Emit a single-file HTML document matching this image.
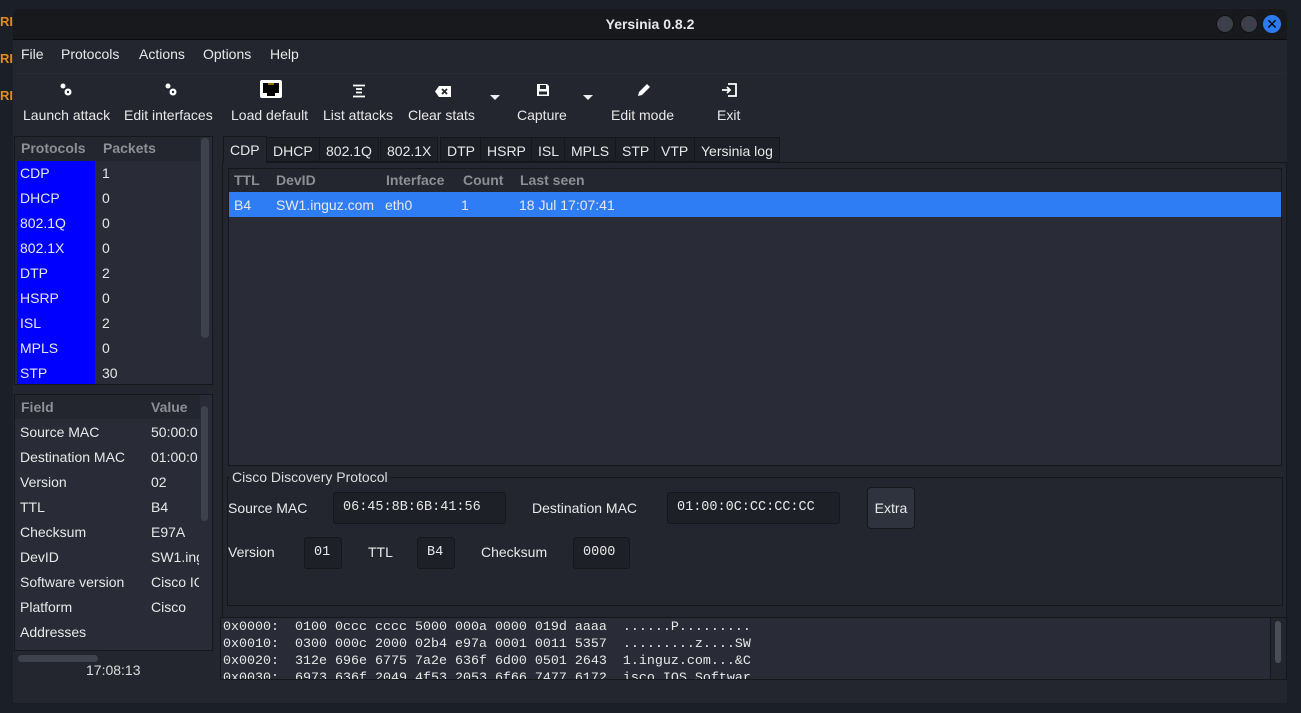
<!DOCTYPE html>
<html><head><meta charset="utf-8"><style>
*{box-sizing:border-box;margin:0;padding:0}
body{width:1301px;height:713px;background:#1b1f27;font-family:"Liberation Sans","DejaVu Sans",sans-serif;font-size:14px;color:#e8e8e8;position:relative;overflow:hidden}
.a{position:absolute;white-space:nowrap}
.win{position:absolute;left:13px;top:9px;width:1274px;height:694px;background:#23262e;border-radius:6px 6px 0 0;overflow:hidden}
.tb{position:absolute;left:0;top:0;width:1274px;height:31px;background:#18191d;border-bottom:1px solid #0c0c0e}
.hd{color:#8c8f96;font-weight:bold}
.box{position:absolute;background:#1e2027;border:1px solid #15171b;border-radius:3px;font-family:"Liberation Mono",monospace;font-size:13.5px;padding-top:7px;padding-left:9px}
.tab{position:absolute;top:138px;height:25px;background:#1e2027;border:1px solid #15171b;padding:5px 6px 0 6px}
.mono{font-family:"Liberation Mono",monospace;font-size:13.33px;line-height:17px;white-space:pre}
</style></head><body>
<div class="a" style="left:0;top:14px;color:#e38b1c;font-weight:bold;font-size:13px">RI</div>
<div class="a" style="left:0;top:51px;color:#e38b1c;font-weight:bold;font-size:13px">RI</div>
<div class="a" style="left:0;top:88px;color:#e38b1c;font-weight:bold;font-size:13px">RI</div>
<div class="win">
<div class="tb"></div>
<div class="a" style="left:0;width:1274px;text-align:center;top:7px;font-weight:bold;font-size:14px">Yersinia 0.8.2</div>
<div class="a" style="left:1203px;top:6px;width:18px;height:18px;border-radius:50%;background:#3c404b;border:1px solid #111"></div>
<div class="a" style="left:1227px;top:6px;width:18px;height:18px;border-radius:50%;background:#3c404b;border:1px solid #111"></div>
<div class="a" style="left:1250px;top:6px;width:18px;height:18px;border-radius:50%;background:#2c7cf0;color:#000;font-weight:bold;text-align:center;line-height:18px;font-size:14px">✕</div>
<div class="a" style="left:8px;top:37px">File</div>
<div class="a" style="left:48px;top:37px">Protocols</div>
<div class="a" style="left:126px;top:37px">Actions</div>
<div class="a" style="left:190px;top:37px">Options</div>
<div class="a" style="left:257px;top:37px">Help</div>
<div class="a" style="left:0;top:64px;width:1274px;height:1px;background:#272a33"></div>
<svg class="a" style="left:46px;top:73px" width="14" height="16" viewBox="0 0 14 16"><circle cx="4" cy="4" r="2.5" fill="#fff"/><circle cx="9" cy="10" r="3.5" fill="#fff"/><circle cx="9" cy="10" r="1.2" fill="#23262e"/></svg>
<svg class="a" style="left:151px;top:73px" width="14" height="16" viewBox="0 0 14 16"><circle cx="4" cy="4" r="2.5" fill="#fff"/><circle cx="9" cy="10" r="3.5" fill="#fff"/><circle cx="9" cy="10" r="1.2" fill="#23262e"/></svg>
<svg class="a" style="left:247px;top:71px" width="22" height="18" viewBox="0 0 22 18"><rect x="0" y="0" width="22" height="18" rx="2" fill="#fff"/><path d="M3 3h16v10h-4v3h-8v-3h-4z" fill="#000"/><path d="M8 4h6" stroke="#c90" stroke-width="1.5"/></svg>
<svg class="a" style="left:339px;top:75px" width="14" height="14" viewBox="0 0 14 14"><path d="M1 1.5h12M4 5h6M4 8.5h6M1 12.5h12" stroke="#fff" stroke-width="1.8"/></svg>
<svg class="a" style="left:422px;top:77px" width="16" height="11" viewBox="0 0 16 11"><path d="M4 0h12v11h-12l-4-5.5z" fill="#fff"/><path d="M7 3l5 5M12 3l-5 5" stroke="#23262e" stroke-width="1.8"/></svg>
<svg class="a" style="left:523px;top:74px" width="14" height="14" viewBox="0 0 14 14"><path d="M1 1h10l2 2v10h-12z" fill="#fff"/><rect x="4" y="2" width="6" height="4" fill="#23262e"/><rect x="3" y="8.5" width="8" height="3" fill="#23262e"/></svg>
<svg class="a" style="left:624px;top:74px" width="14" height="14" viewBox="0 0 14 14"><path d="M1 13l1-4 8-8 3 3-8 8z" fill="#fff"/></svg>
<svg class="a" style="left:709px;top:74px" width="15" height="14" viewBox="0 0 15 14"><path d="M6 1h8v12h-8" fill="none" stroke="#fff" stroke-width="1.8"/><path d="M0 7h8M5 4l3 3-3 3" fill="none" stroke="#fff" stroke-width="1.8"/></svg>
<div class="a" style="left:477px;top:86px;width:0;height:0;border-left:5px solid transparent;border-right:5px solid transparent;border-top:5px solid #eee"></div>
<div class="a" style="left:570px;top:86px;width:0;height:0;border-left:5px solid transparent;border-right:5px solid transparent;border-top:5px solid #eee"></div>
<div class="a" style="left:10px;top:98px">Launch attack</div>
<div class="a" style="left:111px;top:98px">Edit interfaces</div>
<div class="a" style="left:218px;top:98px">Load default</div>
<div class="a" style="left:310px;top:98px">List attacks</div>
<div class="a" style="left:395px;top:98px">Clear stats</div>
<div class="a" style="left:504px;top:98px">Capture</div>
<div class="a" style="left:598px;top:98px">Edit mode</div>
<div class="a" style="left:704px;top:98px">Exit</div>
<div class="a" style="left:1px;top:127px;width:199px;height:249px;border:1px solid #15171b;background:#292c36"></div>
<div class="a" style="left:2px;top:128px;width:185px;height:24px;background:#23262e"></div>
<div class="a hd" style="left:8px;top:131px">Protocols</div>
<div class="a hd" style="left:90px;top:131px">Packets</div>
<div class="a" style="left:4px;top:152px;width:78px;height:223px;background:#0000ff"></div>
<div class="a" style="left:188px;top:129px;width:8px;height:200px;background:#3e424c;border-radius:4px"></div>
<div class="a" style="left:7px;top:152px;line-height:25px">CDP<br>DHCP<br>802.1Q<br>802.1X<br>DTP<br>HSRP<br>ISL<br>MPLS<br>STP</div>
<div class="a" style="left:89px;top:152px;line-height:25px">1<br>0<br>0<br>0<br>2<br>0<br>2<br>0<br>30</div>
<div class="a" style="left:1px;top:385px;width:199px;height:257px;border:1px solid #15171b;background:#292c36"></div>
<div class="a" style="left:2px;top:386px;width:185px;height:24px;background:#23262e"></div>
<div class="a hd" style="left:8px;top:390px">Field</div>
<div class="a hd" style="left:138px;top:390px">Value</div>
<div class="a" style="left:188px;top:397px;width:7px;height:115px;background:#3e424c;border-radius:4px"></div>
<div class="a" style="left:5px;top:646px;width:80px;height:7px;background:#3e424c;border-radius:4px"></div>
<div class="a" style="left:7px;top:411px;line-height:25px">Source MAC<br>Destination MAC<br>Version<br>TTL<br>Checksum<br>DevID<br>Software version<br>Platform<br>Addresses</div>
<div class="a" style="left:138px;top:411px;line-height:25px;width:48px;overflow:hidden">50:00:0<br>01:00:0<br>02<br>B4<br>E97A<br>SW1.ing<br>Cisco IO<br>Cisco<br>&nbsp;</div>
<div class="a" style="left:73px;top:653px;color:#ddd">17:08:13</div>
<div class="a" style="left:209px;top:153px;width:1065px;height:517px;border:1px solid #15171b"></div>
<div class="tab" style="left:210px;top:127px;background:#23262e;border-bottom:none;height:27px">CDP</div>
<div class="tab" style="left:253px;top:128px">DHCP</div>
<div class="tab" style="left:306px;top:128px">802.1Q</div>
<div class="tab" style="left:367px;top:128px">802.1X</div>
<div class="tab" style="left:427px;top:128px">DTP</div>
<div class="tab" style="left:467px;top:128px">HSRP</div>
<div class="tab" style="left:518px;top:128px">ISL</div>
<div class="tab" style="left:551px;top:128px">MPLS</div>
<div class="tab" style="left:602px;top:128px">STP</div>
<div class="tab" style="left:641px;top:128px">VTP</div>
<div class="tab" style="left:681px;top:128px">Yersinia log</div>
<div class="a" style="left:215px;top:159px;width:1054px;height:298px;border:1px solid #15171b;background:#292c36"></div>
<div class="a" style="left:216px;top:160px;width:1052px;height:23px;background:#23262e"></div>
<div class="a hd" style="left:221px;top:163px">TTL</div>
<div class="a hd" style="left:263px;top:163px">DevID</div>
<div class="a hd" style="left:373px;top:163px">Interface</div>
<div class="a hd" style="left:450px;top:163px">Count</div>
<div class="a hd" style="left:507px;top:163px">Last seen</div>
<div class="a" style="left:216px;top:183px;width:1052px;height:25px;background:#2f7df4"></div>
<div class="a" style="left:221px;top:188px">B4</div>
<div class="a" style="left:263px;top:188px">SW1.inguz.com</div>
<div class="a" style="left:372px;top:188px">eth0</div>
<div class="a" style="left:448px;top:188px">1</div>
<div class="a" style="left:506px;top:188px">18 Jul 17:07:41</div>
<div class="a" style="left:214px;top:468px;width:1056px;height:129px;border:1px solid #15171b"></div>
<div class="a" style="left:217px;top:460px;background:#23262e;padding:0 2px;color:#ddd">Cisco Discovery Protocol</div>
<div class="a" style="left:215px;top:491px">Source MAC</div>
<div class="box" style="left:320px;top:483px;width:173px;height:32px">06:45:8B:6B:41:56</div>
<div class="a" style="left:519px;top:491px">Destination MAC</div>
<div class="box" style="left:654px;top:483px;width:173px;height:32px">01:00:0C:CC:CC:CC</div>
<div class="a" style="left:854px;top:478px;width:48px;height:42px;background:#2f333e;border:1px solid #15171b;border-radius:4px;text-align:center;line-height:40px">Extra</div>
<div class="a" style="left:215px;top:535px">Version</div>
<div class="box" style="left:291px;top:528px;width:38px;height:32px">01</div>
<div class="a" style="left:355px;top:535px">TTL</div>
<div class="box" style="left:404px;top:528px;width:38px;height:32px">B4</div>
<div class="a" style="left:468px;top:535px">Checksum</div>
<div class="box" style="left:560px;top:528px;width:57px;height:32px">0000</div>
<div class="a" style="left:207px;top:608px;width:1067px;height:63px;border:1px solid #15171b;background:#292c36;overflow:hidden"></div>
<div class="a mono" style="left:210px;top:610px;height:60px;overflow:hidden">0x0000:  0100 0ccc cccc 5000 000a 0000 019d aaaa  ......P.........
0x0010:  0300 000c 2000 02b4 e97a 0001 0011 5357  .........z....SW
0x0020:  312e 696e 6775 7a2e 636f 6d00 0501 2643  1.inguz.com...&amp;C
0x0030:  6973 636f 2049 4f53 2053 6f66 7477 6172  isco IOS Softwar</div>
<div class="a" style="left:1257px;top:609px;width:16px;height:61px;background:#23262e;border-left:1px solid #15171b"></div>
<div class="a" style="left:1262px;top:612px;width:6px;height:42px;background:#4a4e58;border-radius:3px"></div>
</div>
</body></html>
